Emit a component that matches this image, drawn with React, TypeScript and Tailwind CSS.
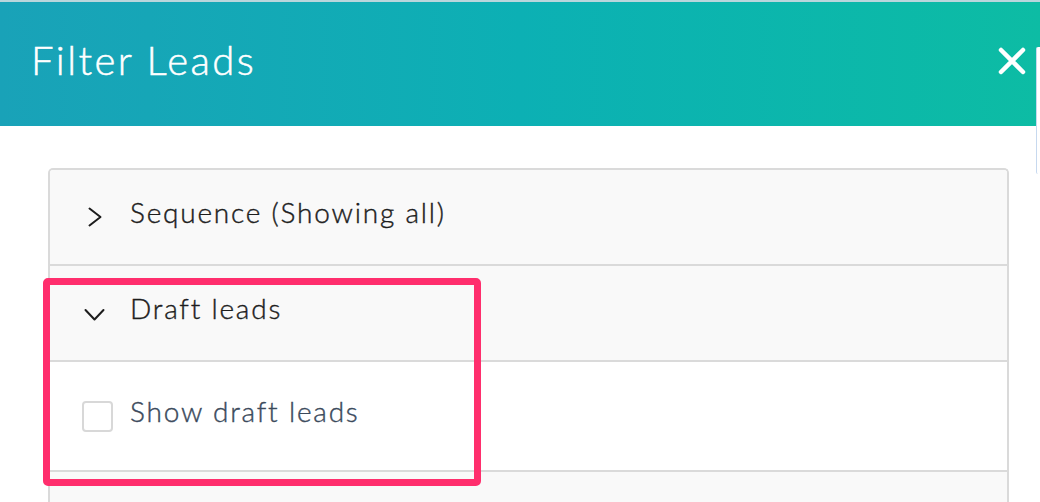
const font = { fontFamily: 'Lato, "Noto Sans", sans-serif' };

function Chevron({ open }: { open: boolean }) {
    return open ? (
        <svg width="21" height="14" viewBox="0 0 21 14" className="ml-[-4px] mt-[4px] text-[#1d1d1d]">
            <polyline points="1.5,2 10.5,11.5 19.5,2" fill="none" stroke="currentColor" strokeWidth="2" strokeLinecap="round" strokeLinejoin="round" />
        </svg>
    ) : (
        <svg width="15" height="20" viewBox="0 0 15 20" className="text-[#1d1d1d]">
            <polyline points="1.5,1.5 12.5,10 1.5,18.5" fill="none" stroke="currentColor" strokeWidth="2" strokeLinecap="round" strokeLinejoin="round" />
        </svg>
    );
}

function SectionHeader({ open, label }: { open: boolean; label: string }) {
    return (
        <div className="flex h-[94px] items-center bg-[#f9f9f9] pl-[38px]">
            <div className="flex w-[42px] items-center">
                <Chevron open={open} />
            </div>
            <span className="mb-[10px] text-[28px] font-light tracking-[1.8px] text-[#1d1d1d] [-webkit-text-stroke:0.4px_#1d1d1d]">{label}</span>
        </div>
    );
}

export default function App() {
    return (
        <div className="relative h-[502px] w-[1040px] overflow-hidden bg-white" style={font}>
            <div className="h-[2px] bg-[#b9d6dc]" />
            {/* Header */}
            <div className="flex h-[124px] items-center justify-between bg-gradient-to-r from-[#19a2b8] via-[#0cb0b4] to-[#0dbca4] pl-[31px] pr-[14px]">
                <h1 className="mb-[9px] text-[40px] font-light tracking-[2.4px] text-white [-webkit-text-stroke:0.5px_white]">Filter Leads</h1>
                <svg width="28" height="28" viewBox="0 0 28 28" className="mb-[6px]">
                    <path d="M3 3 L25 25 M25 3 L3 25" stroke="white" strokeWidth="4.5" strokeLinecap="round" />
                </svg>
            </div>

            {/* Accordion */}
            <div className="ml-[48px] mr-[31px] mt-[42px] overflow-hidden rounded-t-[5px] border-x-2 border-t-2 border-[#dadada]">
                <SectionHeader open={false} label="Sequence (Showing all)" />
                <div className="border-t-2 border-[#dadada]">
                    <SectionHeader open label="Draft leads" />
                </div>
                <div className="flex h-[110px] items-center border-t-2 border-[#dadada] bg-white pl-[32px]">
                    <span className="h-[31px] w-[31px] rounded-[4px] border-2 border-[#d8d8d8] bg-white" />
                    <span className="mb-[10px] ml-[17px] text-[28px] font-light tracking-[1.8px] text-[#3b4a5c] [-webkit-text-stroke:0.4px_#3b4a5c]">Show draft leads</span>
                </div>
                <div className="h-[40px] border-t-2 border-[#dadada] bg-[#f9f9f9]" />
            </div>

            {/* Highlight annotation */}
            <div className="pointer-events-none absolute left-[43px] top-[278px] h-[208px] w-[438px] rounded-[5px] border-[7px] border-[#ff2e6d]" />

            {/* right-edge sliver */}
            <div className="absolute right-0 top-[47px] h-[127px] w-[4px] rounded-l-[2px] border-l border-[#c7d9ef] bg-white" />
        </div>
    );
}
